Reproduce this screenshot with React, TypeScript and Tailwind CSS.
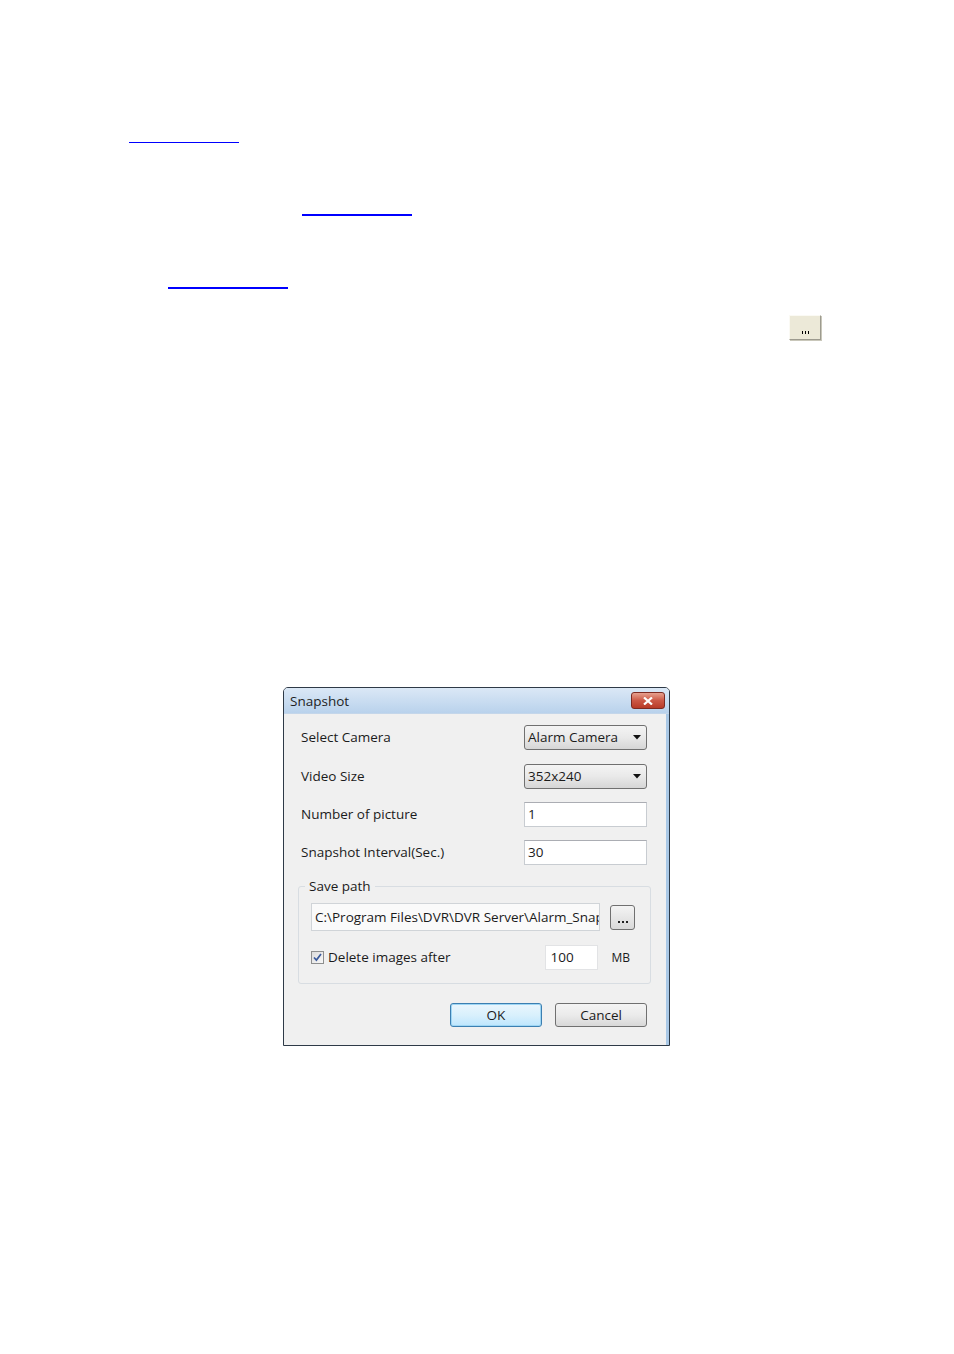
import { ReactNode } from "react";

const font = "font-['Open_Sans','Noto_Sans',sans-serif]";

function Field({ value }: { value: string }) {
    return (
        <div className="w-[123px] h-[25px] bg-white border border-[#c8ccd1] border-t-[#abadb3] flex items-center pl-[3px] text-[13.5px] text-[#1b1b1b]">
            {value}
        </div>
    );
}

function Combo({ value }: { value: string }) {
    return (
        <div className="w-[123px] h-[25px] rounded-[3px] border border-[#707070] bg-gradient-to-b from-[#f4f4f4] via-[#e9e9e9] to-[#d6d6d6] flex items-center justify-between pl-[3px] pr-[5px] text-[13.5px] text-[#1b1b1b]">
            <span>{value}</span>
            <svg width="8" height="5" viewBox="0 0 8 5"><path d="M0 0h8L4 4.5z" fill="#111" /></svg>
        </div>
    );
}

function Row({ label, className, children }: { label: string; className?: string; children: ReactNode }) {
    return (
        <div className={`flex items-center justify-between pl-[17px] pr-[19px] ${className ?? ""}`}>
            <span className="text-[13.5px] text-[#1b1b1b]">{label}</span>
            {children}
        </div>
    );
}

function Underline({ className }: { className: string }) {
    return <div className={`bg-[#0000ff] ${className}`} />;
}

export default function App() {
    return (
        <div className={`w-[954px] h-[1354px] bg-white overflow-hidden ${font}`}>
            <Underline className="mt-[142px] ml-[129px] w-[110px] h-px" />
            <Underline className="mt-[71px] ml-[302px] w-[110px] h-[2px]" />
            <Underline className="mt-[71px] ml-[168px] w-[120px] h-[2px]" />

            {/* small browse button */}
            <div className="mt-[26px] ml-[789px] w-[32px] h-[25px] bg-[#ece9d8] border border-[#fbfaf4] border-r-[#9d9b8f] border-b-[#9d9b8f] shadow-[1px_1px_0_#c9c7ba] flex items-end justify-center pb-[5px]">
                <div className="flex gap-[2px]">
                    <span className="w-px h-[3px] bg-black" />
                    <span className="w-px h-[3px] bg-black" />
                    <span className="w-px h-[3px] bg-black" />
                </div>
            </div>

            {/* dialog */}
            <div className="mt-[347px] ml-[283px] w-[387px] h-[359px] border border-[#2e3a47] rounded-t-[5px] bg-[#f0f0f0] flex flex-col overflow-hidden">
                <div className="h-[26px] shrink-0 bg-gradient-to-b from-[#dbe8f6] to-[#b9d2ec] flex items-center justify-between pl-[6px] pr-[4px] border-b border-[#c4d6ea]">
                    <span className="text-[13.5px] text-[#1e1e1e] pt-[2px]">Snapshot</span>
                    <div className="w-[34px] h-[17px] rounded-[3px] border border-[#7d2a22] bg-gradient-to-b from-[#e6a08f] via-[#cc5846] to-[#b83a27] flex items-center justify-center">
                        <svg width="10" height="8" viewBox="0 0 10 8">
                            <path d="M1 0.5l8 7M9 0.5l-8 7" stroke="#fff" strokeWidth="2.2" />
                        </svg>
                    </div>
                </div>

                <div className="flex-1 flex border-r-[3px] border-[#a9c8e6]">
                    <div className="flex-1 flex flex-col pt-[11px]">
                        <Row label="Select Camera"><Combo value="Alarm Camera" /></Row>
                        <Row label="Video Size" className="mt-[14px]"><Combo value="352x240" /></Row>
                        <Row label="Number of picture" className="mt-[13px]"><Field value="1" /></Row>
                        <Row label="Snapshot Interval(Sec.)" className="mt-[13px]"><Field value="30" /></Row>

                        <div className="relative mt-[21px] ml-[14px] mr-[15px] h-[98px] border border-[#d8dde2] rounded-[3px]">
                            <span className="absolute -top-[10px] left-[6px] px-[4px] bg-[#f0f0f0] text-[13.5px] text-[#1b1b1b] leading-[18px]">Save path</span>
                            <div className="flex items-center mt-[16px] ml-[12px] gap-[10px]">
                                <div className="w-[289px] h-[28px] bg-[#fafafa] border border-[#d0d4d8] flex items-center pl-[3px] text-[13.5px] text-[#1b1b1b] overflow-hidden whitespace-nowrap">
                                    C:\Program Files\DVR\DVR Server\Alarm_Snapshot
                                </div>
                                <div className="w-[25px] h-[25px] rounded-[3px] border border-[#707070] bg-gradient-to-b from-[#f4f4f4] to-[#d9d9d9] flex items-end justify-center pb-[6px]">
                                    <div className="flex gap-[2px]">
                                        <span className="w-[2px] h-[2px] bg-[#222]" />
                                        <span className="w-[2px] h-[2px] bg-[#222]" />
                                        <span className="w-[2px] h-[2px] bg-[#222]" />
                                    </div>
                                </div>
                            </div>
                            <div className="flex items-center mt-[14px] ml-[12px]">
                                <div className="w-[13px] h-[13px] border border-[#8e8f8f] bg-gradient-to-br from-[#dcdcdc] to-[#f8f8f8] flex items-center justify-center">
                                    <svg width="9" height="9" viewBox="0 0 9 9">
                                        <path d="M1 4.5l2.4 2.6L8 1" stroke="#3a5a9c" strokeWidth="1.7" fill="none" />
                                    </svg>
                                </div>
                                <span className="ml-[4px] text-[13.5px] text-[#1b1b1b]">Delete images after</span>
                                <div className="ml-auto w-[53px] h-[25px] bg-white border border-[#e2e3e5] flex items-center pl-[4px] text-[13.5px] text-[#1b1b1b]">100</div>
                                <span className="ml-[13px] mr-[20px] text-[12px] text-[#1b1b1b]">MB</span>
                            </div>
                        </div>

                        <div className="flex justify-end gap-[13px] mt-[19px] pr-[19px]">
                            <div className="w-[92px] h-[24px] rounded-[3px] border border-[#3c7fb1] shadow-[inset_0_0_0_1px_#9ed6f4] bg-gradient-to-b from-[#eaf6fd] via-[#d9f0fc] to-[#bee6fd] flex items-center justify-center text-[13.5px] text-[#1b1b1b]">
                                OK
                            </div>
                            <div className="w-[92px] h-[24px] rounded-[3px] border border-[#707070] bg-gradient-to-b from-[#f4f4f4] via-[#ebebeb] to-[#d8d8d8] flex items-center justify-center text-[13.5px] text-[#1b1b1b]">
                                Cancel
                            </div>
                        </div>
                    </div>
                </div>
            </div>
        </div>
    );
}
